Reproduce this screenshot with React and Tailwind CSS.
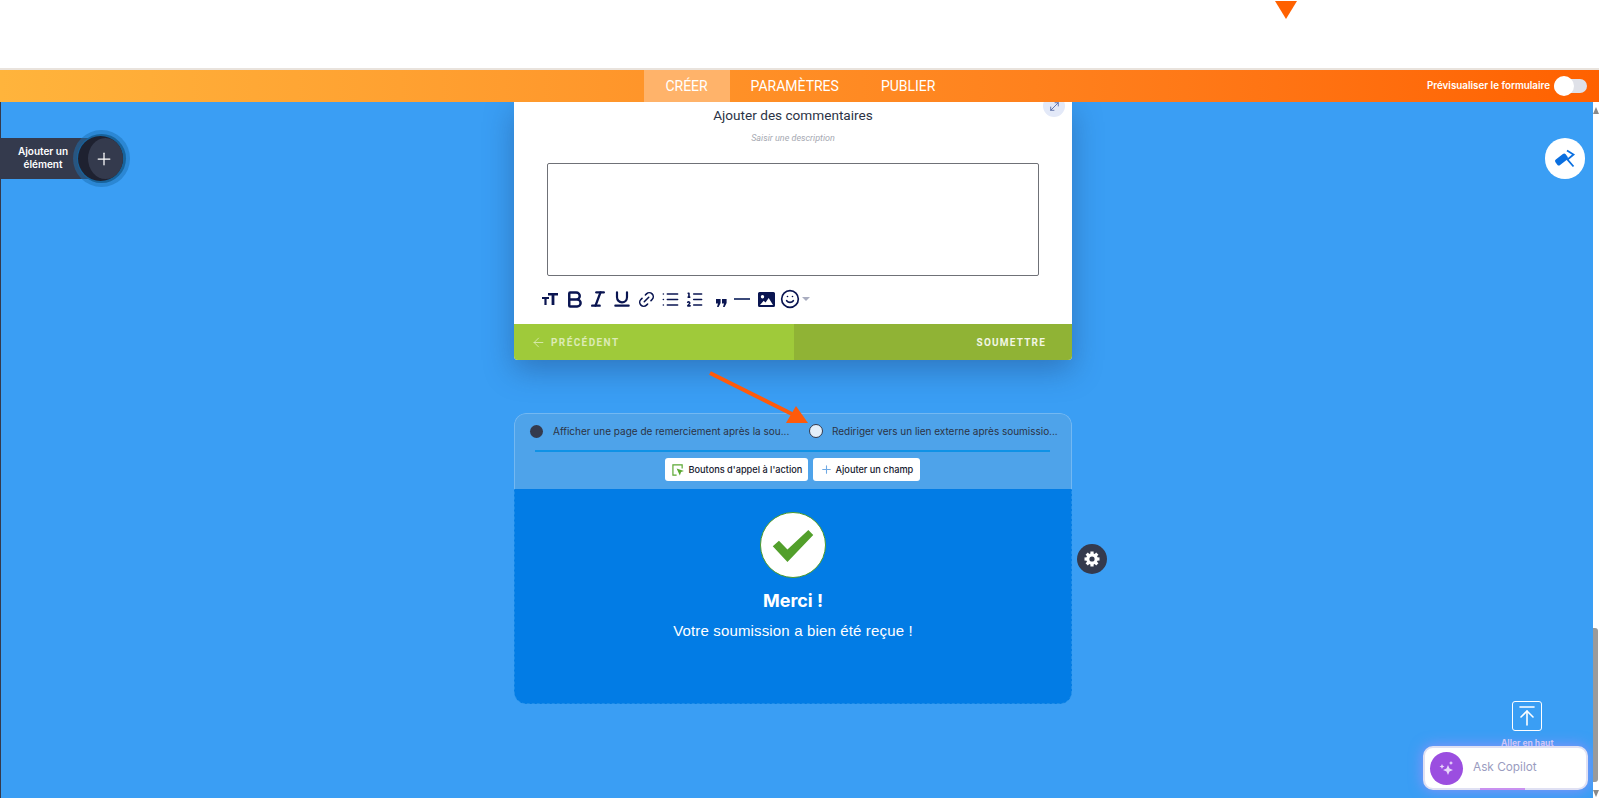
import React from 'react';
import { Plus, Smile, Link2, List, ListOrdered, Bold, Italic, Underline, ArrowLeft, ArrowUpToLine, MoveDiagonal } from 'lucide-react';

function TextSizeIcon() {
    return (
        <svg width="16" height="14" viewBox="0 0 16 14" fill="#0a1551">
            <path d="M6 1h10v2.400h-3.600V13H9.600V3.400H6z" />
            <path d="M0 5h7v2H4.600v6H2.400V7H0z" />
        </svg>
    );
}

function GearIcon() {
    return (
        <svg width="16" height="16" viewBox="0 0 16 16">
            {[0, 45, 90, 135].map(a => (
                <rect key={a} x="6.400" y="0.500" width="3.200" height="15" fill="#fff" transform={`rotate(${a} 8 8)`} />
            ))}
            <circle cx="8" cy="8" r="5.800" fill="#fff" />
            <circle cx="8" cy="8" r="2.600" fill="#343a4d" />
        </svg>
    );
}

function RollerIcon() {
    return (
        <svg width="22" height="20" viewBox="0 0 22 20" fill="none">
            <rect x="1" y="7" width="13" height="7" rx="2" fill="#0a6fe0" transform="rotate(-38 7.500 10.500)" />
            <path d="M13 1.500l6.500 4-6 5 6 7" stroke="#0a6fe0" strokeWidth="1.800" />
        </svg>
    );
}

function Toolbar() {
    return (
        <div className="flex items-center h-[22px] mt-[12px] ml-[24px] text-[#0a1551]">
            <div className="w-[24px] flex justify-center"><TextSizeIcon /></div>
            <div className="w-[24px] flex justify-center"><Bold className="w-[21px] h-[21px]" strokeWidth={2.800} /></div>
            <div className="w-[24px] flex justify-center"><Italic className="w-[20px] h-[20px]" strokeWidth={2.800} /></div>
            <div className="w-[24px] flex justify-center"><Underline className="w-[20px] h-[20px]" strokeWidth={2.600} /></div>
            <div className="w-[24px] flex justify-center"><Link2 className="w-[19px] h-[19px] -rotate-45" strokeWidth={2} /></div>
            <div className="w-[24px] flex justify-center"><List className="w-[19px] h-[19px]" strokeWidth={2} /></div>
            <div className="w-[24px] flex justify-center"><ListOrdered className="w-[19px] h-[19px]" strokeWidth={2} /></div>
            <svg className="ml-[10px] mt-[7px]" width="11" height="8" viewBox="0 0 11 8" fill="#0a1551">
                <path d="M0 0h4.600v4L2.600 8H1l1-3.400H0zM6 0h4.600v4l-2 4H7l1-3.400H6z" />
            </svg>
            <div className="w-[16px] h-[2px] ml-[7px] bg-[#3b4a7a]" />
            <svg className="ml-[8px]" width="17" height="15" viewBox="0 0 17 15" fill="#0a1551">
                <path fillRule="evenodd" d="M1.500 0h14A1.500 1.500 0 0 1 17 1.500v12a1.500 1.500 0 0 1-1.500 1.500h-14A1.500 1.500 0 0 1 0 13.500v-12A1.500 1.500 0 0 1 1.500 0zM4.500 3a1.700 1.700 0 1 0 0 3.400 1.700 1.700 0 0 0 0-3.400zM2 13h13l-4.300-7-3.200 4.500-1.800-1.700z" />
            </svg>
            <Smile className="w-[20px] h-[20px] ml-[5px]" strokeWidth={2} />
            <div className="ml-[2px] w-0 h-0 border-x-[4px] border-x-transparent border-t-[4px] border-t-[#a9adc0]" />
        </div>
    );
}

function FormCard() {
    return (
        <div className="w-[558px] h-[258px] bg-white rounded-b-[4px] shadow-[0_10px_30px_rgba(30,60,110,0.4)] flex flex-col relative">
            <div className="absolute right-[7px] -top-[7px] w-[22px] h-[22px] rounded-full bg-[#e3e9f8] flex items-center justify-center">
                <MoveDiagonal className="w-[13px] h-[13px] text-[#4a5f9c]" strokeWidth={1.500} />
            </div>
            <div className="text-center text-[#2c3345] text-[13.600px] leading-[18px] pt-[4px] font-['Roboto',sans-serif]">Ajouter des commentaires</div>
            <div className="text-center text-[#a6a9b2] text-[9px] italic leading-[12px] mt-[8px] font-['Roboto',sans-serif]">Saisir une description</div>
            <div className="mx-[33px] mt-[19px] h-[113px] border border-[#6f7177] rounded-[2px]" />
            <Toolbar />
            <div className="mt-auto h-[36px] flex rounded-b-[4px] overflow-hidden font-['Roboto',sans-serif] text-[10px] font-bold tracking-[1.400px]">
                <div className="w-[280px] bg-[#9fca3a] flex items-center pl-[17px] text-[#dcebb5]">
                    <ArrowLeft className="w-[15px] h-[15px] mr-[5px]" strokeWidth={1.400} />
                    PRÉCÉDENT
                </div>
                <div className="flex-1 bg-[#90b335] flex items-center justify-end pr-[26px] text-[#f2f6e4] tracking-[1.200px]">SOUMETTRE</div>
            </div>
        </div>
    );
}

function ThanksPanel() {
    return (
        <div className="w-[558px] h-[291px] mt-[53px] rounded-[12px] overflow-hidden relative font-['Inter',sans-serif]">
            <div className="h-[76px] bg-[#4ea3ea] rounded-t-[12px] border-t border-x border-[#73b8f2]">
                <div className="flex h-[36px] pb-[2px] text-[#2c3345] text-[10px] leading-[16px]">
                    <div className="flex items-center w-[278px] pl-[15px]">
                        <div className="w-[13px] h-[13px] rounded-full bg-[#343a4d]" />
                        <span className="ml-[10px] whitespace-nowrap">Afficher une page de remerciement après la sou...</span>
                    </div>
                    <div className="flex items-center pl-[16px]">
                        <div className="w-[14px] h-[14px] rounded-full bg-[#e3effa] border border-[#343a4d]" />
                        <span className="ml-[9px] whitespace-nowrap tracking-[-0.020px]">Rediriger vers un lien externe après soumissio...</span>
                    </div>
                </div>
                <div className="h-[2px] bg-[#0f92e6] ml-[20px] w-[515px]" />
                <div className="flex justify-center gap-[5px] mt-[6px] pr-[2px] text-[9.200px] font-medium text-[#14172e]">
                    <div className="w-[143px] h-[23px] pl-[7px] bg-white rounded-[3px] flex items-center gap-[5px] whitespace-nowrap">
                        <svg width="12" height="12" viewBox="0 0 13 13" fill="none">
                            <path d="M5 12H1V1h10v4" stroke="#5aa832" strokeWidth="1.300" />
                            <path d="M5 5l8 2.500-3.200 1.300L8.500 12.500z" fill="#5aa832" />
                        </svg>
                        Boutons d'appel à l'action
                    </div>
                    <div className="w-[107px] h-[23px] pl-[7px] bg-white rounded-[3px] flex items-center gap-[3px] whitespace-nowrap">
                        <Plus className="w-[13px] h-[13px] text-[#6fa9e4]" strokeWidth={2} />
                        Ajouter un champ
                    </div>
                </div>
            </div>
            <div className="h-[215px] bg-[#027ce5] rounded-b-[12px] border-x border-b border-dashed border-[#1f8de8] flex flex-col items-center text-white">
                <div className="w-[66px] h-[66px] mt-[23px] rounded-full bg-white border border-[#4d9b2a]">
                    <svg width="64" height="64" viewBox="360 68 196 196">
                        <path d="M396 170L415 153 441 180 505 120 520 135 441 218z" fill="#529f2b" />
                    </svg>
                </div>
                <div className="text-[18px] leading-[22px] font-bold mt-[12px]">Merci !</div>
                <div className="text-[15px] tracking-[0.150px] leading-[18px] mt-[10px] font-['Liberation_Sans',sans-serif]">Votre soumission a bien été reçue !</div>
            </div>
        </div>
    );
}

export default function App() {
    return (
        <div className="h-[798px] w-[1599px] overflow-hidden bg-white flex flex-col relative font-['Inter',sans-serif]">
            {/* Top white bar with the little marker */}
            <div className="h-[70px] shrink-0 border-b-2 border-[#e9e3dd] relative">
                <div className="absolute left-[1275px] top-[1px] w-0 h-0 border-x-[11px] border-x-transparent border-t-[18px] border-t-[#ff6100]" />
            </div>

            {/* Orange nav */}
            <div className="h-[32px] shrink-0 bg-gradient-to-r from-[#ffb43c] to-[#ff6100] flex justify-center relative z-10 text-white text-[14px] font-['Roboto',sans-serif]">
                <div className="flex ml-[1px]">
                    <div className="w-[86px] bg-[#ffb36a] flex items-center justify-center">CRÉER</div>
                    <div className="px-[21px] flex items-center">PARAMÈTRES</div>
                    <div className="px-[21px] flex items-center">PUBLIER</div>
                </div>
                <div className="absolute right-[12px] top-0 h-full flex items-center font-['Inter',sans-serif] text-[9.800px] font-semibold">
                    Prévisualiser le formulaire
                    <div className="w-[33px] h-[14px] rounded-full bg-[#dfe1e8] ml-[4px] relative">
                        <div className="absolute left-0 -top-[3px] w-[20px] h-[20px] rounded-full bg-white" />
                    </div>
                </div>
            </div>

            {/* Canvas */}
            <div className="flex-1 flex">
                <div className="flex-1 bg-[#3a9ef4] border-l border-[#343a4d] flex flex-col items-center relative">
                    <div className="flex flex-col items-center ml-[-8px]">
                        <FormCard />
                        <ThanksPanel />
                    </div>

                    {/* Add element */}
                    <div className="absolute left-0 top-[36px] w-[100px] h-[41px] bg-[#343a4d] text-white text-[10px] font-semibold leading-[13px] text-center flex items-center">
                        <div className="w-[84px] -mt-[2px]">Ajouter un<br />élément</div>
                    </div>
                    <div className="absolute left-[72px] top-[28px] w-[57px] h-[57px] rounded-full bg-[#1b6fb4]/50 flex items-center justify-center">
                        <div className="w-[49px] h-[49px] rounded-full bg-[#17639c] flex items-center justify-center">
                            <div className="w-[45px] h-[45px] rounded-full bg-[#1e2130] flex justify-end items-center -ml-[3px]">
                                <div className="w-[35px] h-[41px] rounded-[50%] bg-[#343a4d] flex items-center justify-center pr-[3px]">
                                    <Plus className="w-[20px] h-[20px] text-white" strokeWidth={1.500} />
                                </div>
                            </div>
                        </div>
                    </div>

                    {/* Paint */}
                    <div className="absolute right-[8px] top-[36px] w-[40px] h-[41px] rounded-full bg-white flex items-center justify-center">
                        <RollerIcon />
                    </div>

                    {/* Red arrow */}
                    <svg className="absolute left-[700px] top-[265px]" width="120" height="70" viewBox="0 0 120 70">
                        <path d="M9 6L91 47" stroke="#ff5a0a" strokeWidth="4" />
                        <path d="M95 39L107 56 85 56z" fill="#ff5a0a" />
                    </svg>

                    {/* Gear */}
                    <div className="absolute left-[1076px] top-[442px] w-[30px] h-[30px] rounded-full bg-[#343a4d] flex items-center justify-center">
                        <GearIcon />
                    </div>

                    {/* Scroll top */}
                    <div className="absolute left-[1511px] top-[599px] w-[30px] h-[30px] border border-white rounded-[3px] flex items-center justify-center">
                        <ArrowUpToLine className="w-[24px] h-[24px] text-white" strokeWidth={1.600} />
                    </div>
                    <div className="absolute left-[1500px] top-[635px] text-[8.500px] font-bold text-[#d5d6f5] whitespace-nowrap">Aller en haut</div>

                    {/* Copilot */}
                    <div className="absolute left-[1422px] top-[644px] w-[165px] h-[44px] bg-white rounded-[10px] border-2 border-[#dfe0f3] shadow-[0_0_14px_rgba(180,140,255,0.7)] flex items-center pl-[5px]">
                        <div className="w-[33px] h-[33px] rounded-full bg-[#9b4ee0] flex items-center justify-center">
                            <svg width="18" height="18" viewBox="0 0 18 18" fill="#e8d6fa">
                                <path d="M10 6l1.500 3.500L15 11l-3.500 1.500L10 16l-1.500-3.500L5 11l3.500-1.500z" />
                                <path d="M4 5l.8 1.700L6.500 7.500l-1.700.8L4 10l-.8-1.700L1.500 7.500l1.700-.8z" />
                                <path d="M13 2l.7 1.300L15 4l-1.300.7L13 6l-.7-1.300L11 4l1.300-.7z" />
                            </svg>
                        </div>
                        <span className="ml-[10px] text-[#9a9cc0] text-[11.800px]">Ask Copilot</span>
                        <div className="absolute left-[55px] -bottom-[2px] w-[45px] h-[2px] bg-[#c891f0]" />
                    </div>
                </div>

                {/* Scrollbar strip */}
                <div className="w-[6px] bg-white shrink-0 relative">
                    <div className="absolute left-0 top-[5px] w-0 h-0 border-x-[3px] border-x-transparent border-b-[7px] border-b-[#8a8a8a]" />
                    <div className="absolute left-0 top-[526px] w-[5px] h-[154px] rounded-r-[3px] bg-[#9a9a9a]" />
                    <div className="absolute left-0 top-[688px] w-0 h-0 border-x-[3px] border-x-transparent border-t-[7px] border-t-[#8a8a8a]" />
                </div>
            </div>
        </div>
    );
}
